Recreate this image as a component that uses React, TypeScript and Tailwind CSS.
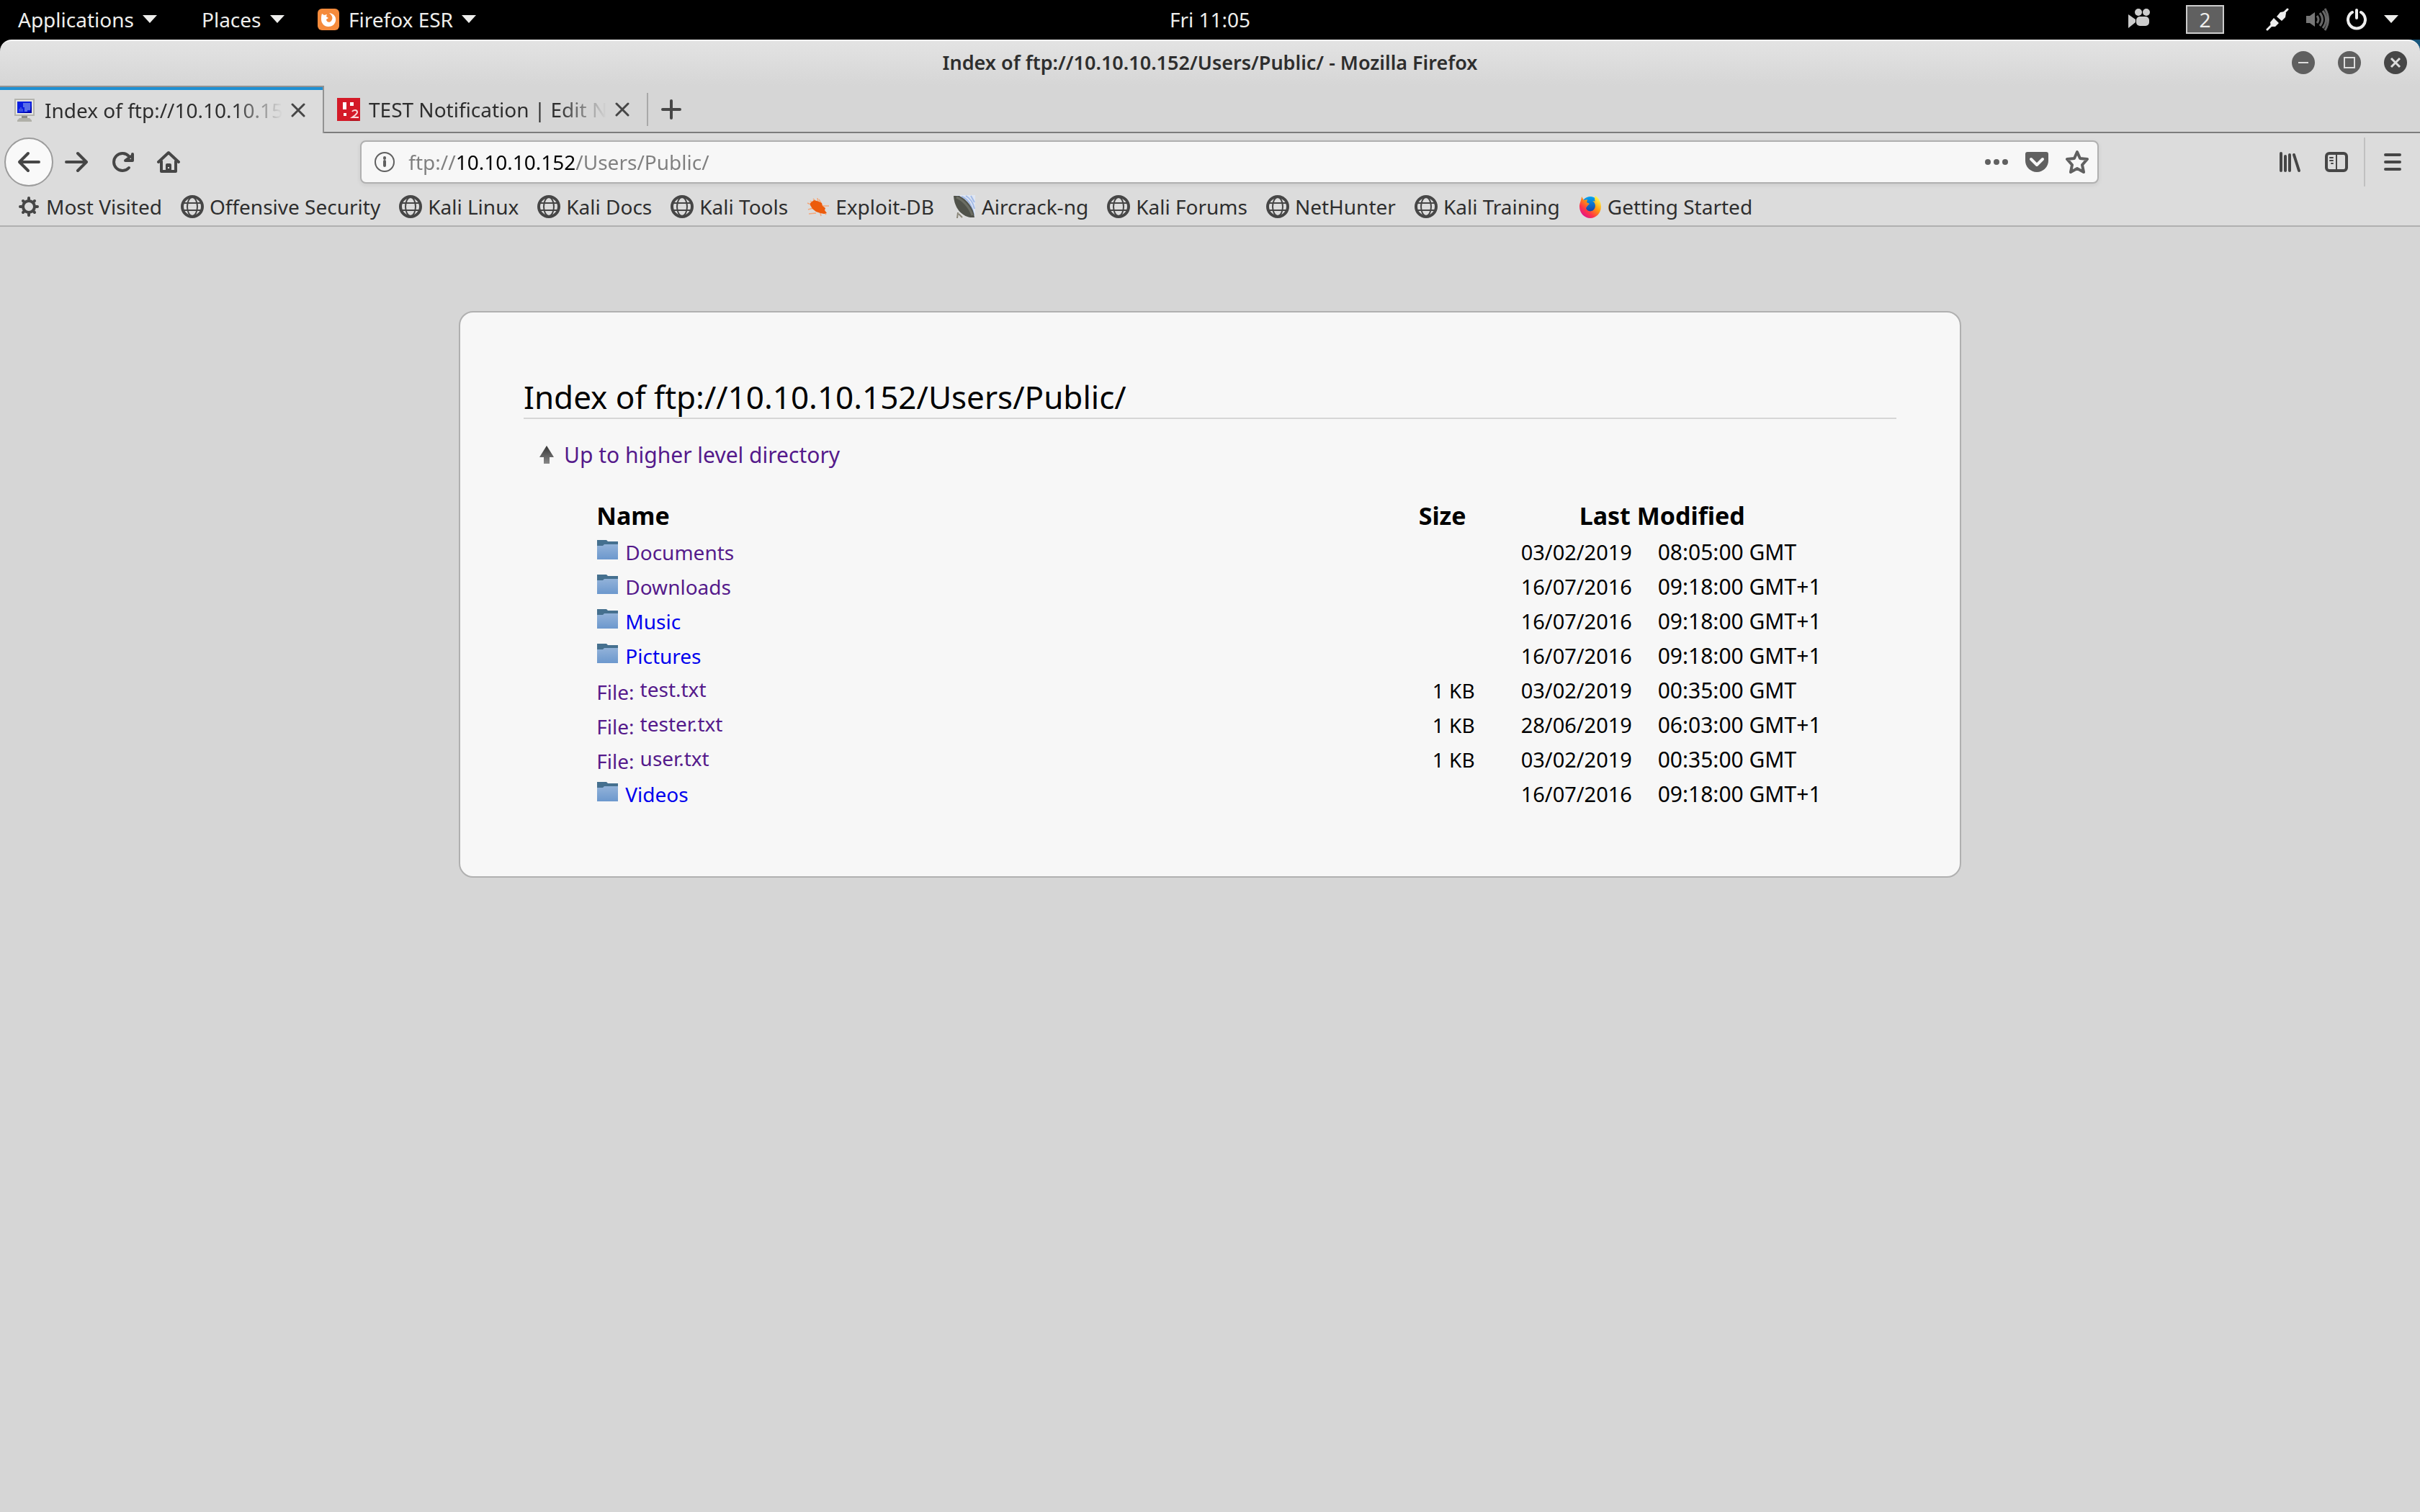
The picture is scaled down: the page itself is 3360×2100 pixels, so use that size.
import { type ReactNode } from "react";

type Entry = {
  name: string;
  kind: "folder" | "file";
  visited: boolean;
  size?: string;
  date: string;
  time: string;
};

const entries: Entry[] = [
  { name: "Documents", kind: "folder", visited: true, date: "03/02/2019", time: "08:05:00 GMT" },
  { name: "Downloads", kind: "folder", visited: true, date: "16/07/2016", time: "09:18:00 GMT+1" },
  { name: "Music", kind: "folder", visited: false, date: "16/07/2016", time: "09:18:00 GMT+1" },
  { name: "Pictures", kind: "folder", visited: false, date: "16/07/2016", time: "09:18:00 GMT+1" },
  { name: "test.txt", kind: "file", visited: true, size: "1 KB", date: "03/02/2019", time: "00:35:00 GMT" },
  { name: "tester.txt", kind: "file", visited: true, size: "1 KB", date: "28/06/2019", time: "06:03:00 GMT+1" },
  { name: "user.txt", kind: "file", visited: true, size: "1 KB", date: "03/02/2019", time: "00:35:00 GMT" },
  { name: "Videos", kind: "folder", visited: false, date: "16/07/2016", time: "09:18:00 GMT+1" },
];

function Caret() {
  return (
    <svg width="20" height="11" viewBox="0 0 20 11" fill="currentColor" aria-hidden="true">
      <path d="M0 0h20L10 11z" />
    </svg>
  );
}

function Gear() {
  return (
    <svg width="32" height="32" viewBox="0 0 32 32" fill="none" stroke="#464646" aria-hidden="true">
      <circle cx="16" cy="16" r="8" strokeWidth="4" />
      <path
        d="M16 4v4M16 24v4M4 16h4M24 16h4M8 8l2 2M22 22l2 2M24 8l-2 2M10 22l-2 2"
        strokeWidth="4"
        strokeLinecap="round"
      />
    </svg>
  );
}

function Globe() {
  return (
    <svg width="32" height="32" viewBox="0 0 32 32" fill="none" stroke="#464646" aria-hidden="true">
      <circle cx="16" cy="16" r="14" strokeWidth="4" />
      <ellipse cx="16" cy="16" rx="7" ry="13" strokeWidth="2" />
      <path d="M4 11h24M4 21h24" strokeWidth="2" />
    </svg>
  );
}

function ExploitDb() {
  return (
    <svg width="32" height="32" viewBox="0 0 32 32" aria-hidden="true">
      <path
        d="M9 5l4 4M15 4l1 6M1 11l7 3M2 20l7-2M3 26l10-1M22 15h9M27 27l-5-5M20 29l-1-4M17 6l3 5M5 8l4 3"
        stroke="#f3a77a"
        strokeWidth="1.500"
      />
      <path d="M5 11l5-4 4 1 3 1 4 2 1 4 4 3-1 3 3 4-4 1-5-1-6-2-5-4-3-5z" fill="#ec5b0c" />
    </svg>
  );
}

function Aircrack() {
  return (
    <svg width="32" height="32" viewBox="0 0 32 32" aria-hidden="true">
      <path d="M4 0h27v31z" fill="#dfe6f2" />
      <path d="M12 2c9 3 14 11 17 25M18 1c7 4 10 9 12 18M25 1l5 9" stroke="#a3bbe8" strokeWidth="2" fill="none" />
      <path d="M1 1h8c10 5 20 16 21 30h-6C12 29 2 18 1 1z" fill="#50524a" />
      <path d="M5 3c8 3 18 13 22 25" stroke="#6c6e63" strokeWidth="3" fill="none" />
      <path d="M7 24l-1 8M8 26l5 5" stroke="#8b8779" strokeWidth="2" />
    </svg>
  );
}

function FirefoxLogo() {
  return (
    <svg width="32" height="32" viewBox="0 0 32 32" aria-hidden="true">
      <defs>
        <linearGradient id="fx" x1="0.85" y1="0.1" x2="0.2" y2="0.9">
          <stop offset="0" stopColor="#fff44f" />
          <stop offset="0.4" stopColor="#ff980e" />
          <stop offset="0.75" stopColor="#ff3647" />
          <stop offset="1" stopColor="#e31587" />
        </linearGradient>
        <linearGradient id="fxb" x1="0" y1="0" x2="0" y2="1">
          <stop offset="0" stopColor="#00a5f2" />
          <stop offset="1" stopColor="#1a2f9c" />
        </linearGradient>
      </defs>
      <circle cx="16" cy="14" r="12" fill="url(#fxb)" />
      <path
        d="M4 2l3 5 5-1-1 4 4 2-3 3-2 3c1 4 6 6 10 3 5-4 3-11-1-13 3 0 4 1 4 1-2-4 0-8 0-8 5 3 8 9 8 15 0 9-7 16-15 16S1 25 1 16C1 11 3 9 4 2z"
        fill="url(#fx)"
      />
    </svg>
  );
}

const bookmarks: { label: string; icon: ReactNode }[] = [
  { label: "Most Visited", icon: <Gear /> },
  { label: "Offensive Security", icon: <Globe /> },
  { label: "Kali Linux", icon: <Globe /> },
  { label: "Kali Docs", icon: <Globe /> },
  { label: "Kali Tools", icon: <Globe /> },
  { label: "Exploit-DB", icon: <ExploitDb /> },
  { label: "Aircrack-ng", icon: <Aircrack /> },
  { label: "Kali Forums", icon: <Globe /> },
  { label: "NetHunter", icon: <Globe /> },
  { label: "Kali Training", icon: <Globe /> },
  { label: "Getting Started", icon: <FirefoxLogo /> },
];

function TopBar() {
  return (
    <header className="grid h-[55px] grid-cols-[1fr_auto_1fr] items-center bg-black pb-[2px] text-[#eeeeec]">
      <nav className="flex items-center pl-[25px]">
        <button className="flex w-[255px] items-center gap-3">
          Applications <Caret />
        </button>
        <button className="flex w-[160px] items-center gap-3">
          Places <Caret />
        </button>
        <button className="flex items-center gap-3">
          <svg width="32" height="32" viewBox="0 0 32 32" aria-hidden="true">
            <rect x="1" y="1" width="30" height="30" rx="6" fill="#f58b3c" />
            <path
              d="M7 8l3 2 4-1-1 3 3 2-3 2c0 4 5 5 7 2 3-4 1-8-3-11 7 1 10 6 9 11-1 5-5 8-10 8-6 0-10-5-10-10 0-3 0-5 1-8z"
              fill="#fff"
            />
          </svg>
          Firefox ESR <Caret />
        </button>
      </nav>
      <time>Fri 11:05</time>
      <div className="flex items-center justify-end pr-[30px]">
        <button aria-label="Recorder" className="mr-12">
          <svg width="32" height="34" viewBox="0 0 32 34" fill="#ccc" aria-hidden="true">
            <circle cx="14" cy="7" r="5" />
            <circle cx="25" cy="7" r="5" />
            <rect x="11" y="13" width="18" height="13" rx="5" />
            <path d="M0 10l10 7v4L0 29z" />
          </svg>
        </button>
        <button className="mr-[58px] h-10 w-[53px] border-2 border-[#ccc] bg-[#606060] leading-9">2</button>
        <button className="flex items-center gap-6" aria-label="System menu">
          <svg width="32" height="32" viewBox="0 0 32 32" aria-hidden="true">
            <path d="M2 30L9 23M23 9l7-7" stroke="#eee" strokeWidth="3" strokeLinecap="round" />
            <path d="M6 20l5-6 7 7-5 5H7zM15 12l5-6 6-1 2 2-1 6-5 5z" fill="#eee" />
          </svg>
          <svg width="32" height="32" viewBox="0 0 32 32" fill="none" stroke="#666" strokeWidth="3" aria-hidden="true">
            <path d="M0 11h5l7-5v20l-7-5H0z" fill="#777" stroke="none" />
            <path d="M15 11q4 5 0 10M19 7q7 9 0 18M23 4q9 12 0 24M26 1q9 15 0 30" />
          </svg>
          <svg width="28" height="32" viewBox="0 0 28 32" fill="none" stroke="#eee" strokeWidth="4" strokeLinecap="round" aria-hidden="true">
            <path d="M14 3v11M8 6a12 12 0 1 0 12 0" />
          </svg>
          <Caret />
        </button>
      </div>
    </header>
  );
}

function WindowButton({ label, tone, children }: { label: string; tone: string; children: ReactNode }) {
  return (
    <button aria-label={label} className={tone}>
      <svg width="32" height="32" viewBox="0 0 32 32" fill="none" stroke="#ddd" strokeWidth="2" aria-hidden="true">
        <circle cx="16" cy="16" r="16" fill="currentColor" stroke="none" />
        {children}
      </svg>
    </button>
  );
}

function TitleBar() {
  return (
    <div className="bg-linear-to-r from-black to-[#17567c]">
      <div className="grid h-16 grid-cols-[1fr_auto_1fr] items-center rounded-t-2xl border-t-2 border-[#f8f8f8] bg-linear-to-b from-[#e3e3e3] to-[#d6d6d6] pb-[2px]">
        <h1 className="col-start-2 text-[27px] font-semibold">
          Index of ftp://10.10.10.152/Users/Public/ - Mozilla Firefox
        </h1>
        <div className="flex justify-end gap-8 pr-[18px]">
          <WindowButton label="Minimize" tone="text-[#5f5f5f]">
            <path d="M9 16h14" />
          </WindowButton>
          <WindowButton label="Maximize" tone="text-[#5f5f5f]">
            <path d="M9 9h14v14H9z" />
          </WindowButton>
          <WindowButton label="Close" tone="text-[#464646]">
            <path d="M10 10l12 12M22 10L10 22" strokeWidth="3" />
          </WindowButton>
        </div>
      </div>
    </div>
  );
}

function CloseTab() {
  return (
    <button aria-label="Close tab" className="shrink-0">
      <svg width="20" height="20" viewBox="0 0 20 20" stroke="#464646" strokeWidth="3" strokeLinecap="round" aria-hidden="true">
        <path d="M2 2l16 16M18 2L2 18" />
      </svg>
    </button>
  );
}

function TabTitle({ children }: { children: ReactNode }) {
  return (
    <span className="min-w-0 flex-1 overflow-hidden whitespace-nowrap mask-r-from-80% mask-r-to-100%">{children}</span>
  );
}

function TabStrip() {
  return (
    <div className="flex h-[66px] bg-[#d6d6d6]">
      <div className="flex w-[450px] items-center gap-3 border-t-2 border-r-2 border-[#929292] bg-[#dcdcdc] pr-6 pl-[18px] shadow-[inset_0_4px_0_#1f90d2]">
        <svg width="32" height="32" viewBox="0 0 32 32" className="shrink-0" aria-hidden="true">
          <path d="M2 0h28v24H2z" fill="#b4b4ae" />
          <path d="M4 2h24v20H4z" fill="#e6e6e2" />
          <path d="M6 4h20v16H6z" fill="#0a1ee0" />
          <path d="M14 6h10v10h-4v2h-4v-6h-2z" fill="#5a70e8" />
          <path d="M8 18v-4h2v-2h2v2h2v4z" fill="#3a4ee0" />
          <path d="M8 20h18V8l-2 10z" fill="#0000a0" />
          <path d="M12 24h8v3h-8z" fill="#8c8c86" />
          <path d="M9 27h14l3 3v2H6v-2z" fill="#b0b0a8" />
        </svg>
        <TabTitle>Index of ftp://10.10.10.152</TabTitle>
        <CloseTab />
      </div>
      <div className="flex flex-1 border-b-2 border-[#7d7d7d] pt-[2px]">
        <div className="flex w-[448px] items-center gap-3 pr-6 pl-[18px]">
          <svg width="32" height="32" viewBox="0 0 32 32" className="shrink-0" aria-hidden="true">
            <path d="M0 0h32v32H0z" fill="#d41a28" />
            <path d="M8 6h5v10H8zM18 6h5v5h-5zM9 21h4v4H9z" fill="#fff" />
            <path d="M21 19q1-2 4-2 3 0 3 3 0 1-3 4l-4 3h9" fill="none" stroke="#fbdada" strokeWidth="2" />
            <path d="M18 30h12v2H18z" fill="#b51420" />
          </svg>
          <TabTitle>TEST Notification | Edit N</TabTitle>
          <CloseTab />
        </div>
        <div className="my-2 w-[2px] bg-[#a8a8a8]" />
        <button aria-label="New tab" className="px-[18px]">
          <svg width="28" height="28" viewBox="0 0 28 28" stroke="#464646" strokeWidth="4" strokeLinecap="round" aria-hidden="true">
            <path d="M14 2v24M2 14h24" />
          </svg>
        </button>
      </div>
    </div>
  );
}

function ToolButton({ label, children }: { label: string; children: ReactNode }) {
  return (
    <button aria-label={label} className="flex h-16 w-16 items-center justify-center">
      <svg
        width="32"
        height="32"
        viewBox="0 0 32 32"
        fill="none"
        stroke="#464646"
        strokeWidth="4"
        strokeLinecap="round"
        strokeLinejoin="round"
        aria-hidden="true"
      >
        {children}
      </svg>
    </button>
  );
}

function NavBar() {
  return (
    <div className="flex h-20 items-center bg-[#dcdcdc] px-[6px]">
      <button
        aria-label="Back"
        className="flex h-[68px] w-[68px] items-center justify-center rounded-full border-2 border-[#9c9c9c] bg-[#f9f9f9]"
      >
        <svg width="32" height="32" viewBox="0 0 32 32" fill="none" stroke="#464646" strokeWidth="4" strokeLinecap="round" strokeLinejoin="round" aria-hidden="true">
          <path d="M30 16H3M15 4L3 16l12 12" />
        </svg>
      </button>
      <ToolButton label="Forward">
        <path d="M2 16h28M18 4l12 12-12 12" />
      </ToolButton>
      <ToolButton label="Reload">
        <path d="M25 24a12 12 0 1 1 0-16M30 5v9H20l4-3 4-3" />
      </ToolButton>
      <ToolButton label="Home">
        <path d="M2 16L16 3l14 13M6 15v14h20V15" />
        <path d="M12 29v-9q0-2 2-2h4q2 0 2 2v9z" fill="#464646" stroke="none" />
        <path d="M16 23v2" stroke="#dcdcdc" strokeWidth="2" strokeLinecap="butt" />
      </ToolButton>
      <div className="w-[7%]" />
      <div className="flex h-[60px] flex-1 items-center rounded-lg border-2 border-[#b0b0b0] bg-[#f7f7f7] pr-3 pl-[18px] shadow-[0_2px_6px_rgba(0,0,0,0.08)]">
        <svg width="28" height="28" viewBox="0 0 28 28" fill="none" stroke="#606060" strokeWidth="2" aria-hidden="true">
          <circle cx="14" cy="14" r="13" />
          <path d="M14 13v6M14 8v1" strokeWidth="4" strokeLinecap="round" />
        </svg>
        {/* hard colour stops pick the host out of the address */}
        <input
          type="text"
          aria-label="Address"
          defaultValue="ftp://10.10.10.152/Users/Public/"
          className="ml-[19px] min-w-0 flex-1 bg-[linear-gradient(to_right,#7f7f7f_65px,#000_65px,#000_232px,#7f7f7f_232px)] bg-clip-text text-transparent outline-none"
        />
        <div className="flex items-center gap-6">
          <button aria-label="Page actions">
            <svg width="32" height="32" viewBox="0 0 32 32" fill="#606060" aria-hidden="true">
              <circle cx="4" cy="16" r="4" />
              <circle cx="16" cy="16" r="4" />
              <circle cx="28" cy="16" r="4" />
            </svg>
          </button>
          <button aria-label="Save to Pocket">
            <svg width="32" height="32" viewBox="0 0 32 32" fill="none" aria-hidden="true">
              <path d="M3 2h26q3 0 3 3v9a16 16 0 0 1-32 0V5q0-3 3-3z" fill="#606060" />
              <path d="M8 12l8 8 8-8" stroke="#f7f7f7" strokeWidth="4" strokeLinecap="round" strokeLinejoin="round" />
            </svg>
          </button>
          <button aria-label="Bookmark this page">
            <svg width="32" height="32" viewBox="0 0 32 32" fill="none" stroke="#606060" strokeWidth="4" strokeLinejoin="round" aria-hidden="true">
              <path d="M16 2l4 9 10 1-7 8 2 10-9-5-9 5 2-10-7-8 10-1z" />
            </svg>
          </button>
        </div>
      </div>
      <div className="w-[7%]" />
      <ToolButton label="Library">
        <path d="M3 4v24M9 8v20M15 6v22M21 6l7 22" />
      </ToolButton>
      <ToolButton label="Sidebars">
        <rect x="2" y="4" width="28" height="24" rx="4" />
        <path d="M16 4v24M7 10h4M7 14h4M9 18h2" strokeWidth="2" />
      </ToolButton>
      <div className="mx-[6px] h-[68px] w-[2px] bg-[#c0c0c0]" />
      <ToolButton label="Menu">
        <path d="M6 6h20M6 16h20M6 26h20" />
      </ToolButton>
    </div>
  );
}

function BookmarksBar() {
  return (
    <nav className="flex h-[50px] items-center gap-[26px] border-b-2 border-[#b0b0b0] bg-[#dcdcdc] pb-1 pl-6">
      {bookmarks.map((b) => (
        <a key={b.label} href="#" className="flex items-center gap-2 whitespace-nowrap">
          {b.icon}
          {b.label}
        </a>
      ))}
    </nav>
  );
}

function Folder() {
  return (
    <svg width="32" height="32" viewBox="0 0 32 32" aria-hidden="true">
      <defs>
        <linearGradient id="folder" x1="0" y1="0" x2="0" y2="1">
          <stop offset="0" stopColor="#92b2d9" />
          <stop offset="1" stopColor="#6c98cd" />
        </linearGradient>
      </defs>
      <path d="M1 2h13l2 2h14v10H1z" fill="#45708f" />
      <path d="M1 10h8l2-2h19v21H1z" fill="url(#folder)" />
    </svg>
  );
}

function DirectoryListing() {
  return (
    <main className="mx-auto mt-[117px] max-w-[2086px] rounded-[20px] border-2 border-[#b0b0b0] bg-[#f7f7f7] px-[88px] pt-[88px] pb-[90px] text-black">
      <h2 className="border-b-2 border-[#d6d6d6] text-[44px] leading-[58px]">Index of ftp://10.10.10.152/Users/Public/</h2>
      <p className="mt-[30px] pl-5">
        <a href="#" className="flex items-center gap-3 text-[30px] leading-10 text-[#551a8b]">
          <svg width="24" height="28" viewBox="0 0 24 28" aria-hidden="true">
            <defs>
              <linearGradient id="up" x1="0" y1="0" x2="0" y2="1">
                <stop offset="0" stopColor="#333" />
                <stop offset="1" stopColor="#888" />
              </linearGradient>
            </defs>
            <path d="M12 1l10 16h-6v9H8v-9H2z" fill="url(#up)" />
          </svg>
          Up to higher level directory
        </a>
      </p>
      <table className="mx-auto mt-10 w-[90%] table-fixed">
        <colgroup>
          <col />
          <col className="w-[144px]" />
          <col className="w-[190px]" />
          <col className="w-[242px]" />
        </colgroup>
        <thead>
          <tr className="h-[51px] text-left text-[34px] leading-[48px]">
            <th className="pb-[3px] pl-[6px]">Name</th>
            <th className="pb-[3px] pl-2">Size</th>
            <th colSpan={2} className="pr-7 pb-[3px] text-center">
              Last Modified
            </th>
          </tr>
        </thead>
        <tbody>
          {entries.map((e) => (
            <tr key={e.name} className="h-12 leading-[48px]">
              <td className="pl-[6px]">
                <a href="#" className={e.visited ? "flex gap-2 text-[#551a8b]" : "flex gap-2 text-[#0000ee]"}>
                  {e.kind === "folder" ? (
                    <span className="pt-[3px]">
                      <Folder />
                    </span>
                  ) : (
                    <span className="pt-1 leading-[44px]">File:</span>
                  )}
                  <span className="leading-[44px]">{e.name}</span>
                </a>
              </td>
              <td className="pr-[58px] text-right">{e.size}</td>
              <td className="pl-[6px] text-[29px]">{e.date}</td>
              <td className="pl-[6px] text-[30px]">{e.time}</td>
            </tr>
          ))}
        </tbody>
      </table>
    </main>
  );
}

export default function App() {
  return (
    <div className="min-h-screen bg-[#d6d6d6] font-['Noto_Sans',sans-serif] text-[28px] leading-[38px] text-[#2e2e2e]">
      <TopBar />
      <TitleBar />
      <TabStrip />
      <NavBar />
      <BookmarksBar />
      <DirectoryListing />
    </div>
  );
}
